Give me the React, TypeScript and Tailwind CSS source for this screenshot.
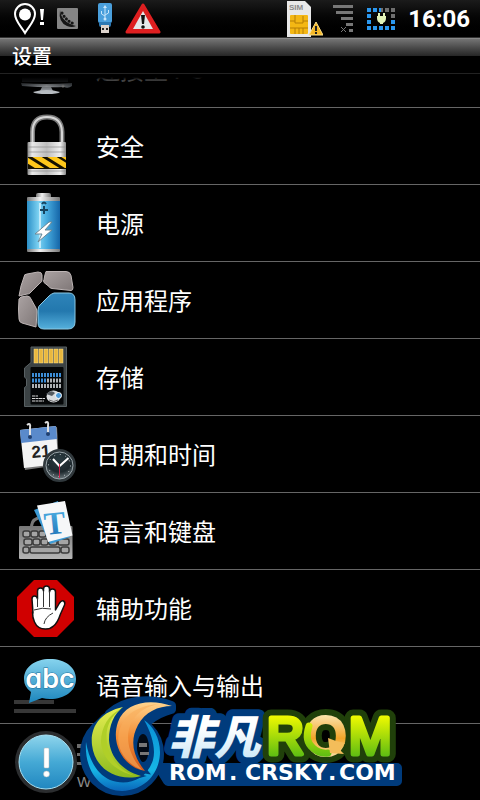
import { ReactNode } from "react";

interface SettingsItem {
  title: string;
  icon: ReactNode;
}

// Общая обёртка для иконок списка
function RowIcon({ children }: { children: ReactNode }) {
  return (
    <svg className="h-16 w-16 shrink-0 overflow-visible" viewBox="0 0 64 64" aria-hidden="true">
      {children}
    </svg>
  );
}

const MonitorIcon = () => (
  <RowIcon>
    <defs>
      <linearGradient id="monitor" x1="0" y1="0" x2="1" y2="0">
        <stop offset="0" stopColor="#4b5157" />
        <stop offset=".5" stopColor="#b5babf" />
        <stop offset="1" stopColor="#555b61" />
      </linearGradient>
    </defs>
    <path d="M7 8h46v37H7z" fill="#2a2e33" />
    <path d="M6 46q25 2 51 0v3q-4 3-8 1-18 1-42-1z" fill="url(#monitor)" />
    <path d="M27 50h9l2 4H25z" fill="#8c9196" />
    <path d="M18 55q14-4 27 0-2 2-13 2-12 0-14-2z" fill="#b7bcc1" />
    <circle cx="48" cy="49" r="1.5" fill="#999" />
  </RowIcon>
);

const LockIcon = () => (
  <RowIcon>
    <defs>
      <linearGradient id="lockBody" x1="0" y1="0" x2="1" y2="0">
        <stop offset="0" stopColor="#8d8d8d" />
        <stop offset=".12" stopColor="#e9e9e9" />
        <stop offset=".5" stopColor="#bdbdbd" />
        <stop offset=".85" stopColor="#f1f1f1" />
        <stop offset="1" stopColor="#8a8a8a" />
      </linearGradient>
      <clipPath id="lockStripe">
        <path d="M13 43h38v11H13z" />
      </clipPath>
    </defs>
    <path d="M17.500 31V18q0-15 14.500-15T47 18v13" fill="none" stroke="#777" strokeWidth="5" />
    <path d="M17.500 31V18q0-15 14.500-15T47 18v13" fill="none" stroke="#d5d5d5" strokeWidth="2" />
    <rect x="12.500" y="28" width="38.500" height="33" rx="1" fill="url(#lockBody)" />
    <path d="M13 33h38M13 38h38M13 57h38" stroke="#8d8d8d" strokeWidth="1" opacity=".7" />
    <path d="M13 43h38v12H13z" fill="#161100" />
    <g clipPath="url(#lockStripe)" stroke="#ffc71a" strokeWidth="5">
      <path d="M-1 38l32 20M14 38l32 20M29 38l32 20M43 38l32 20" />
    </g>
  </RowIcon>
);

const BatteryIcon = () => (
  <RowIcon>
    <defs>
      <linearGradient id="battery" x1="0" y1="0" x2="1" y2="0">
        <stop offset="0" stopColor="#2b8fc7" />
        <stop offset=".35" stopColor="#7dd2f2" />
        <stop offset=".6" stopColor="#48acdf" />
        <stop offset="1" stopColor="#1465a8" />
      </linearGradient>
      <linearGradient id="batteryCap" x1="0" y1="0" x2="1" y2="0">
        <stop offset="0" stopColor="#777" />
        <stop offset=".4" stopColor="#f1f1f1" />
        <stop offset="1" stopColor="#777" />
      </linearGradient>
    </defs>
    <rect x="21" y="2" width="15" height="7" rx="2" fill="url(#batteryCap)" />
    <rect x="12" y="6" width="33" height="5" rx="1" fill="url(#batteryCap)" />
    <rect x="12" y="10" width="33" height="49" fill="url(#battery)" />
    <rect x="12" y="58" width="33" height="3" rx="1" fill="url(#batteryCap)" />
    <path d="M25 12v45" stroke="#d5f3ff" strokeWidth="2" opacity=".8" />
    <path d="M25 19h8M29 15v8M27 13q2-3 4 0" stroke="#16445f" strokeWidth="2" fill="none" />
    <path d="M34 31L20 43h7l-4 8 14-12h-7l7-8z" fill="#fff" stroke="#6b8796" strokeWidth="1" />
  </RowIcon>
);

const AppsIcon = () => (
  <RowIcon>
    <defs>
      <linearGradient id="appsBlue" x1="0" y1="0" x2="0" y2="1">
        <stop offset="0" stopColor="#2e84b9" />
        <stop offset=".5" stopColor="#2378ae" />
        <stop offset="1" stopColor="#55b0dc" />
      </linearGradient>
      <linearGradient id="appsGrey" x1="0" y1="0" x2="1" y2="1">
        <stop offset="0" stopColor="#aaa2a2" />
        <stop offset="1" stopColor="#7f7777" />
      </linearGradient>
    </defs>
    <g fill="url(#appsGrey)" stroke="#bdb5b5" strokeWidth="1" strokeLinejoin="round">
      <path d="M9 9q0-3 3-3l11-2q4 0 4 3v5q0 2-2 3L15 25q-1 1-3 1l-8 2 2-10z" />
      <path d="M31 3.500h20q4 0 5 4l2 12q0 3-2 3l-19-2q-2 0-3-2l-5-4q-1-1 0-3l1-5z" />
      <path d="M4 31l2-2 6-1q3 0 4 3l5 9q1 2 1 4l-1 15-14-4q-3-1-3-4-1-10 0-20z" />
    </g>
    <path d="M39 25h15q6 0 6 7v22q0 7-7 7H29q-6 0-6-6V42q0-4 3-6l8-8q2-2 5-3z" fill="url(#appsBlue)" stroke="#8bc9e5" strokeWidth="1" />
  </RowIcon>
);

const StorageIcon = () => (
  <RowIcon>
    <path d="M16 2h35.500v59.500h-42V42.500l2-1.500v-7l-2-2v-9l6.500-5.500z" fill="#3b4244" stroke="#586063" strokeWidth="1" />
    {[19, 24, 29, 34, 39, 44].map((x) => (
      <rect key={x} x={x} y="4" width="4" height="14" fill="#e9b83f" stroke="#fbe08a" strokeWidth=".5" />
    ))}
    <rect x="15.500" y="22" width="33" height="37.500" rx="1" fill="#050708" />
    <path d="M17 30h30" stroke="#3c8ed8" strokeWidth="4" strokeDasharray="2 1" />
    <path d="M17 35.500h15" stroke="#3c8ed8" strokeWidth="4" strokeDasharray="2 1" />
    <path d="M32 35.500h15M17 41h30" stroke="#aeb2b5" strokeWidth="4" strokeDasharray="2 1" />
    <path d="M17 51h6M17 53.500h13M17 56h12" stroke="#d8d8d8" strokeWidth="1" strokeDasharray="3 .5" />
    <ellipse cx="38.500" cy="51.500" rx="7" ry="6" fill="#d9dcdf" />
    <path d="M31 49q5-5 9-1l-3 3z" fill="#555b60" />
    <circle cx="43.500" cy="50.500" r="3" fill="#4c9ad8" stroke="#fff" strokeWidth="1" />
    <path d="M34 55q5 3 9 0" stroke="#666" strokeWidth="1" fill="none" />
  </RowIcon>
);

const CalendarIcon = () => (
  <RowIcon>
    <defs>
      <radialGradient id="clockFace" cx=".5" cy=".3" r=".7">
        <stop offset="0" stopColor="#2b3b41" />
        <stop offset=".6" stopColor="#1d282d" />
        <stop offset="1" stopColor="#7b878c" />
      </radialGradient>
    </defs>
    <path d="M6 9l36-4 2 38-34 5z" fill="#777" />
    <path d="M5 8l36-4 2 38-34 4z" fill="#f4f4f4" />
    <path d="M5 8l36-4 1 13-36 4z" fill="#5a8acb" />
    <path d="M12 3q4-3 3 3v8M30 1q4-3 3 3v8" fill="none" stroke="#e0e0e0" strokeWidth="2" />
    <circle cx="15" cy="15" r="2" fill="#1f3f70" />
    <circle cx="33" cy="12" r="2" fill="#1f3f70" />
    <text x="17" y="36" fill="#222" fontSize="17" fontWeight="700" fontFamily="Liberation Sans, sans-serif" transform="rotate(-5 17 36)">21</text>
    <circle cx="44.500" cy="43.500" r="15" fill="url(#clockFace)" stroke="#30383c" strokeWidth="3" />
    <circle cx="44.500" cy="43.500" r="13.500" fill="none" stroke="#9aa5aa" strokeWidth="1" />
    <circle cx="44.500" cy="43.500" r="11" fill="none" stroke="#cfd5d8" strokeWidth="1" strokeDasharray="1 4.760" />
    <path d="M38 37l6.500 7 9-8" fill="none" stroke="#fff" strokeWidth="2" />
    <path d="M44.500 42v14" stroke="#d0204a" strokeWidth="1" />
  </RowIcon>
);

const KeyboardIcon = () => (
  <RowIcon>
    <defs>
      <linearGradient id="keyboard" x1="0" y1="0" x2="0" y2="1">
        <stop offset="0" stopColor="#777" />
        <stop offset="1" stopColor="#b5b5b5" />
      </linearGradient>
      <linearGradient id="letterT" x1="0" y1="0" x2="0" y2="1">
        <stop offset="0" stopColor="#53b5e8" />
        <stop offset="1" stopColor="#1b6fb4" />
      </linearGradient>
    </defs>
    <path d="M17 30q-2-8 6-11" fill="none" stroke="#777" strokeWidth="3" />
    <rect x="4" y="27" width="53.500" height="33" rx="1" fill="url(#keyboard)" />
    <g fill="#a5a5a5" stroke="#3b3b3b" strokeWidth="1.500">
      <rect x="8" y="32" width="7" height="6" rx="2" />
      <rect x="16" y="32" width="7" height="6" rx="2" />
      <rect x="24" y="32" width="7" height="6" rx="2" />
      <rect x="9" y="40" width="8" height="6" rx="2" />
      <rect x="18" y="40" width="7" height="6" rx="2" />
      <rect x="26" y="40" width="7" height="6" rx="2" />
      <rect x="34" y="40" width="8" height="6" rx="2" />
      <rect x="43" y="40" width="11" height="6" rx="2" />
      <rect x="8" y="48" width="6" height="6" rx="2" />
      <rect x="15" y="48" width="30" height="6" rx="2" />
      <rect x="46" y="48" width="8" height="6" rx="2" />
    </g>
    <path d="M19 11l24-9 12 36-20 7z" fill="#3c9bd6" />
    <path d="M22 6.500L50 2l7.500 34.500L33 43z" fill="#f6f7f8" />
    <text x="29" y="35" fill="url(#letterT)" fontSize="32" fontWeight="700" fontFamily="Liberation Serif, serif" transform="rotate(-6 40 24)">T</text>
  </RowIcon>
);

const HandIcon = () => (
  <RowIcon>
    <path d="M19 4h23l17 17v23L42 61H19L2 44V21z" fill="#d00000" />
    <path
      d="M18 37l-1-14q0-3 2.500-3t3 3V15q0-3 3-3t3 3v-2q0-3 3-3t3 3v3q0-3 3-3t3 3v18l4-7q2-3 4-2t1 4l-4 9q-3 9-7 12-3 3-8 3-8 0-11-7-2-4-2-10z"
      fill="#fff"
      stroke="#111"
      strokeWidth="1.500"
      strokeLinejoin="round"
    />
    <path d="M22.500 22v9M28.500 15v16M34.500 15v16M19 34q8-3 17-1M29 48q1-7 9-11" fill="none" stroke="#333" strokeWidth="1" />
  </RowIcon>
);

const VoiceIcon = () => (
  <RowIcon>
    <defs>
      <linearGradient id="bubble" x1="0" y1="0" x2="0" y2="1">
        <stop offset="0" stopColor="#86d3ee" />
        <stop offset="1" stopColor="#1c86bd" />
      </linearGradient>
    </defs>
    <path d="M-1 47h40v4H-1zM-1 56h62v4H-1z" fill="#373737" />
    <path d="M35 6c15 0 26 8 26 20S50 46 35 46q-4 0-8-1l-13 5 2-11q-7-5-7-13C9 14 20 6 35 6z" fill="url(#bubble)" />
    <text
      x="35"
      y="35"
      textAnchor="middle"
      fill="#fff"
      stroke="#1f6f9b"
      strokeWidth="1"
      paintOrder="stroke"
      fontSize="27"
      fontWeight="600"
      fontFamily="Inter, sans-serif"
      className="[font-feature-settings:'cv11']"
    >
      abc
    </text>
  </RowIcon>
);

const AboutIcon = () => (
  <RowIcon>
    <defs>
      <linearGradient id="about" x1="0" y1="0" x2="0" y2="1">
        <stop offset="0" stopColor="#8fd5ec" />
        <stop offset=".5" stopColor="#45a9d5" />
        <stop offset="1" stopColor="#2187c0" />
      </linearGradient>
    </defs>
    <circle cx="31" cy="32" r="31" fill="#2b2d2f" />
    <circle cx="31" cy="32" r="27" fill="url(#about)" stroke="#a9e2f5" strokeWidth="1" />
    <rect x="29" y="18" width="5" height="20" rx="1" fill="#fff" stroke="#b4b4b4" strokeWidth=".5" />
    <circle cx="31.500" cy="44" r="3" fill="#fff" stroke="#b4b4b4" strokeWidth=".5" />
  </RowIcon>
);

const items: SettingsItem[] = [
  { title: "连接至 PC", icon: <MonitorIcon /> },
  { title: "安全", icon: <LockIcon /> },
  { title: "电源", icon: <BatteryIcon /> },
  { title: "应用程序", icon: <AppsIcon /> },
  { title: "存储", icon: <StorageIcon /> },
  { title: "日期和时间", icon: <CalendarIcon /> },
  { title: "语言和键盘", icon: <KeyboardIcon /> },
  { title: "辅助功能", icon: <HandIcon /> },
  { title: "语音输入与输出", icon: <VoiceIcon /> },
  { title: "", icon: <AboutIcon /> },
];

function StatusBar() {
  return (
    <header className="flex h-[38px] shrink-0 items-center border-b border-[#333] bg-linear-to-b from-[#1b1b1b] to-black px-2.5">
      <div className="flex w-[38px] justify-center">
        <svg width="32" height="32" viewBox="0 0 32 32" aria-hidden="true">
          <path d="M12 30C8 23 2 18 2 11a10 10 0 0 1 20 0c0 7-6 12-10 19z" fill="none" stroke="#fff" strokeWidth="2" />
          <circle cx="12" cy="11.500" r="6" fill="#fff" />
          <path d="M27 6h4l-1 11h-2z" fill="#fff" />
          <rect x="27" y="19" width="4" height="3" fill="#fff" />
        </svg>
      </div>
      <div className="flex w-[38px] justify-center">
        <svg width="21" height="21" viewBox="0 0 21 21" aria-hidden="true">
          <rect width="21" height="21" rx="1" fill="#858585" />
          <path d="M3 2q1 12 16 16-4 2-9 0Q1 14 3 2z" fill="#151515" />
          <path d="M5 5q5 9 13 11" fill="none" stroke="#151515" strokeWidth="3" strokeLinecap="round" strokeDasharray=".1 3.500" />
        </svg>
      </div>
      <div className="flex w-[38px] justify-center">
        <svg width="14" height="31" viewBox="0 0 14 31" aria-hidden="true">
          <rect width="14" height="20" rx="2" fill="#4a9fdc" />
          <path d="M7 4v12M3.500 8v3L7 13M10.500 7v3L7 12" fill="none" stroke="#c9e6fa" strokeWidth="1" />
          <path d="M7 2l2 3H5z" fill="#c9e6fa" />
          <circle cx="7" cy="16" r="1.500" fill="#c9e6fa" />
          <path d="M1 19h12v3q0 2-2 2H3q-2 0-2-2z" fill="#2c78b3" />
          <path d="M3 22h8v8H3z" fill="#ddd3cc" />
          <path d="M4 25h2v2H4zM8 25h2v2H8z" fill="#222" />
        </svg>
      </div>
      <div className="flex w-[38px] justify-center">
        <svg width="36" height="31" viewBox="0 0 36 31" aria-hidden="true">
          <path d="M18 2l16 27H2z" fill="#de1f20" stroke="#de1f20" strokeWidth="3" strokeLinejoin="round" />
          <path d="M18 8l10 18H8z" fill="#e4e8ea" />
          <path d="M16 12h4l-1 9h-2z" fill="#111" />
          <circle cx="18" cy="24" r="1.800" fill="#111" />
        </svg>
      </div>

      <div className="ml-auto flex w-[38px] justify-center">
        <svg width="36" height="36" viewBox="0 0 36 36" aria-hidden="true">
          <path d="M0 0h18l6 6v30H0z" fill="#e8e8e8" />
          <text x="2" y="9" fill="#8a8a8a" fontSize="8" fontWeight="700" fontFamily="Liberation Sans, sans-serif">SIM</text>
          <rect x="3" y="14" width="18" height="19" rx="1" fill="#f4b714" />
          <path d="M3 20h5v-6M8 20v2h8v-7M16 20h5M3 27h18M8 27v6M12 27v6M16 27v6" fill="none" stroke="#b67f06" strokeWidth="1" />
          <path d="M29 21l7 13H22z" fill="#f6b825" stroke="#fbe08c" strokeWidth="1" strokeLinejoin="round" />
          <path d="M29 25v5M29 31v2" stroke="#222" strokeWidth="2" />
        </svg>
      </div>
      <div className="flex w-[38px] justify-center">
        <svg width="20" height="27" viewBox="0 0 20 27" aria-hidden="true">
          <path d="M0 0h20v3H0zM3 6h17v3H3zM8 12h12v3H8zM13 18h7v3h-7zM16 24h4v3h-4z" fill="#777" />
          <path d="M8 22l5 5M13 22l-5 5" stroke="#777" strokeWidth="1" />
        </svg>
      </div>
      <div className="flex w-[38px] justify-center">
        <svg width="28" height="22" viewBox="0 0 28 22" aria-hidden="true">
          <path d="M0 0h4v4H0zM6 0h4v4H6zM0 6h4v4H0zM0 12h4v4H0zM0 18h4v4H0zM6 18h4v4H6zM12 18h4v4h-4zM18 18h4v4h-4zM24 18h4v4h-4zM24 12h4v4h-4zM12 0h2v4h-2z" fill="#2b98ef" />
          <path d="M14 0h2v4h-2zM18 0h4v4h-4zM24 0h4v4h-4zM24 6h4v4h-4z" fill="#6f6f6f" />
          <path d="M11 5h2v3h3V5h2v3h1v2q0 4-3 5v1h-3v-1q-3-1-3-5V8h1z" fill="#e2f3b8" />
        </svg>
      </div>
      <time className="ml-2 font-[Roboto,sans-serif] text-2xl font-bold text-white">16:06</time>
    </header>
  );
}

function SettingsRow({ item }: { item: SettingsItem }) {
  return (
    <li className="border-b border-[#666]">
      <button type="button" className="flex h-[76px] w-full items-center gap-[17px] pr-4 pl-[15px] text-left">
        {item.icon}
        <span className="text-2xl">{item.title}</span>
      </button>
    </li>
  );
}

// Логотип сборки поверх нижней части экрана
function RomLogo() {
  return (
    <svg className="pointer-events-none absolute bottom-0 left-1/2 -translate-x-1/2" width="330" height="110" viewBox="75 690 330 110" aria-hidden="true">
      <defs>
        <linearGradient id="logoGreen" x1="0" y1="0" x2="0" y2="1">
          <stop offset="0" stopColor="#e6ee52" />
          <stop offset="1" stopColor="#8dbb1e" />
        </linearGradient>
        <linearGradient id="logoOrange" x1="0" y1="0" x2="0" y2="1">
          <stop offset="0" stopColor="#ffd48d" />
          <stop offset=".5" stopColor="#f28c35" />
          <stop offset="1" stopColor="#d4581a" />
        </linearGradient>
        <linearGradient id="logoCyan" x1="0" y1="0" x2="0" y2="1">
          <stop offset="0" stopColor="#0a8fd5" />
          <stop offset=".7" stopColor="#16b6e6" />
          <stop offset="1" stopColor="#0a66ba" />
        </linearGradient>
        <linearGradient id="logoIce" x1="0" y1="0" x2="0" y2="1">
          <stop offset=".4" stopColor="#fff" />
          <stop offset="1" stopColor="#bfe2f5" />
        </linearGradient>
        <linearGradient id="logoLime" gradientUnits="userSpaceOnUse" x1="0" y1="715" x2="0" y2="756">
          <stop offset="0" stopColor="#f3fb00" />
          <stop offset="1" stopColor="#5fbd12" />
        </linearGradient>
        <linearGradient id="logoArrow" gradientUnits="userSpaceOnUse" x1="0" y1="715" x2="0" y2="754">
          <stop offset="0" stopColor="#fbe3ac" />
          <stop offset=".6" stopColor="#f3a529" />
          <stop offset="1" stopColor="#f8d896" />
        </linearGradient>
      </defs>

      <g fill="#6b6b6b">
        <path d="M77 744h20v4H77zM77 753h20v3H77zM77 762h15v3H77z" />
        <text x="77" y="787" fill="#8a8a8a" fontSize="15" fontFamily="Liberation Sans, sans-serif">W</text>
      </g>

      <g fill="#003b7c" stroke="#003b7c" strokeWidth="10" strokeLinejoin="round">
        <circle cx="122" cy="754" r="37" />
        <path d="M171 706C150 698 125 700 110 714l20 28q15-26 41-33z" />
        <path d="M160 768h237v13H168z" />
      </g>
      <ellipse cx="143" cy="748" rx="6" ry="14" fill="#030a14" />
      <path d="M139 743h8v4h-8zM140 752h9v3h-9z" fill="#777" />
      <path d="M86 742c-2 28 14 49 36 49 26-1 38-21 38-39 0-14-7-26-16-32 8 14 12 29 9 40-7 22-28 26-43 20-13-6-21-20-24-38z" fill="url(#logoCyan)" />
      <path d="M123 707c-23 5-33 20-31 38 3 25 26 37 49 31-21-6-31-21-32-36 0-15 5-26 14-33z" fill="url(#logoGreen)" stroke="#003b7c" strokeWidth="3" paintOrder="stroke" />
      <path d="M121 709c-12 9-16 20-14 34 2 15 13 28 29 33-20-4-34-17-35-34 0-15 8-28 20-33z" fill="#b0cf28" />
      <path d="M172 706c-22-8-47-4-54 16-8 23 7 46 27 49-13-16-15-31-7-46 7-13 20-19 34-19z" fill="url(#logoOrange)" stroke="#003b7c" strokeWidth="5" paintOrder="stroke" />
      <path d="M160 704c-31 4-44 36-18 66-22-9-28-29-21-44 7-16 23-21 39-22z" fill="#f9ad5c" opacity=".6" />

      <text x="168" y="754" fontSize="46" fontWeight="900" fontStyle="italic" fill="url(#logoIce)" stroke="#003b7c" strokeWidth="14" strokeLinejoin="round" paintOrder="stroke" fontFamily="Noto Sans CJK SC, sans-serif">
        非凡
      </text>

      <g fontSize="51" fontFamily="Liberation Sans, sans-serif" strokeLinejoin="round">
        <text
          y="754"
          fill="url(#logoLime)"
          stroke="#20400a"
          strokeWidth="17"
          paintOrder="stroke"
        >
          <tspan x="267">R</tspan>
          <tspan x="306">O</tspan>
          <tspan x="349">M</tspan>
        </text>
        <text y="754" strokeWidth="5" fill="url(#logoLime)" stroke="url(#logoLime)">
          <tspan x="267">R</tspan>
          <tspan x="306" fill="url(#logoArrow)" stroke="url(#logoArrow)">O</tspan>
          <tspan x="349">M</tspan>
        </text>
        <path d="M309 726q-5 15 4 22 6 6 15 5" fill="none" stroke="url(#logoLime)" strokeWidth="7" strokeLinecap="round" />
        <path d="M328 738l2 15 14 1-4-4 5-7-9-2z" fill="#f3bd5a" />
      </g>

      <text y="780" fontSize="22" fontWeight="700" fill="#fff" fontFamily="DejaVu Sans, sans-serif">
        <tspan x="169">ROM</tspan>
        <tspan x="229">.</tspan>
        <tspan x="245">CRSKY</tspan>
        <tspan x="328">.</tspan>
        <tspan x="339">COM</tspan>
      </text>
    </svg>
  );
}

export default function App() {
  return (
    <div className="relative flex h-screen flex-col overflow-hidden bg-black font-['Noto_Sans_CJK_SC',sans-serif] text-white">
      <StatusBar />

      {/* Заголовок экрана */}
      <div className="flex h-9 shrink-0 items-center border-t border-b border-t-[#888] border-b-[#222] bg-linear-to-b from-[#747474] from-0% via-[#262626] via-50% to-black to-50% px-3">
        <h1 className="text-xl font-medium">设置</h1>
      </div>

      <main className="relative min-h-0 flex-1 overflow-hidden">
        <ul className="-mt-[43px]">
          {items.map((item, index) => (
            <SettingsRow key={index} item={item} />
          ))}
        </ul>
        {/* Затемнение края прокрутки */}
        <div className="pointer-events-none absolute inset-x-0 top-0 h-4 bg-linear-to-b from-black from-20% to-transparent" />
      </main>

      <RomLogo />
    </div>
  );
}
